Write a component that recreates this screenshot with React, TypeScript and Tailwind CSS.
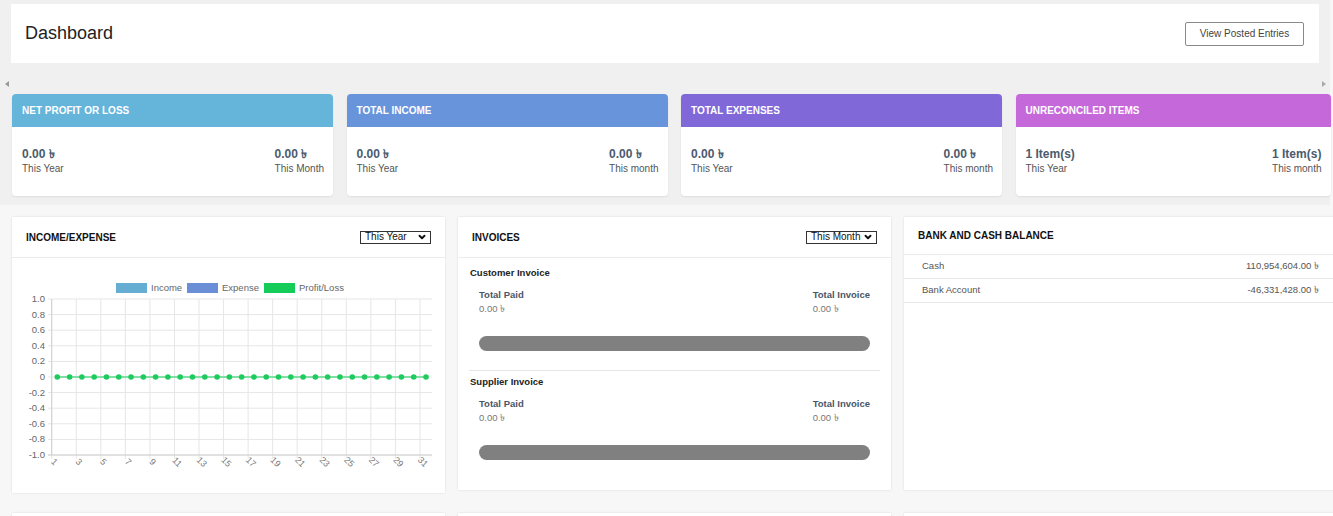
import { ChevronDown } from "lucide-react";

const kpis = [
  { title: "NET PROFIT OR LOSS", color: "bg-[#65b4da]", left: "0.00 ৳", right: "0.00 ৳", rightLabel: "This Month", w: "w-[321px]" },
  { title: "TOTAL INCOME", color: "bg-[#6794da]", left: "0.00 ৳", right: "0.00 ৳", rightLabel: "This month", w: "w-[321px]" },
  { title: "TOTAL EXPENSES", color: "bg-[#8068d9]", left: "0.00 ৳", right: "0.00 ৳", rightLabel: "This month", w: "w-[321px]" },
  { title: "UNRECONCILED ITEMS", color: "bg-[#c568d9]", left: "1 Item(s)", right: "1 Item(s)", rightLabel: "This month", w: "w-[315px]" },
];

const yLabels = ["1.0", "0.8", "0.6", "0.4", "0.2", "0", "-0.2", "-0.4", "-0.6", "-0.8", "-1.0"];
const points = Array.from({ length: 31 }, (_, i) => 45.3 + i * 12.29);

function Select({ label }: { label: string }) {
  return (
    <div className="flex h-[13px] w-[71px] items-center justify-between border border-[#333] bg-white pl-[4px] pr-[3px] text-[10px] leading-none text-[#111]">
      <span>{label}</span>
      <ChevronDown size={10} strokeWidth={4.5} />
    </div>
  );
}

function CardHeader({ title, children, h = "h-[41px]" }: { title: string; children?: React.ReactNode; h?: string }) {
  return (
    <div className={`flex ${h} items-center justify-between border-b border-[#ececec] px-[14px]`}>
      <span className="text-[10px] font-bold text-[#111]">{title}</span>
      {children}
    </div>
  );
}

function Chart() {
  return (
    <svg width="433" height="235" className="block">
      <rect x="104" y="25" width="31" height="10" fill="#66add3" />
      <text x="139" y="33" fontSize="9.5" fill="#666">Income</text>
      <rect x="175" y="25" width="31" height="10" fill="#6a8fd6" />
      <text x="210" y="33" fontSize="9.5" fill="#666">Expense</text>
      <rect x="252" y="25" width="31" height="10" fill="#14cc5a" />
      <text x="287" y="33" fontSize="9.5" fill="#666">Profit/Loss</text>
      {yLabels.map((l, i) => (
        <g key={l}>
          <line x1="36" x2="420" y1={41 + i * 15.6} y2={41 + i * 15.6} stroke="#e6e6e6" strokeWidth="1" />
          <text x="33" y={44 + i * 15.6} fontSize="9.5" fill="#666" textAnchor="end">{l}</text>
        </g>
      ))}
      {Array.from({ length: 16 }, (_, k) => (
        <line key={k} x1={39.7 + k * 24.55} x2={39.7 + k * 24.55} y1="41" y2="201" stroke="#e6e6e6" strokeWidth="1" />
      ))}
      <line x1="39.7" x2="39.7" y1="41" y2="197" stroke="#d0d0d0" strokeWidth="1" />
      <line x1="36" x2="420" y1="197" y2="197" stroke="#d0d0d0" strokeWidth="1" />
      <line x1={points[0]} x2={points[30]} y1="119" y2="119" stroke="#7ee0a2" strokeWidth="2" />
      {points.map((x, i) => (
        <circle key={i} cx={x} cy="119" r="2.8" fill="#1fca5f" />
      ))}
      {points.map((x, i) =>
        i % 2 === 0 ? (
          <text key={i} x={x - 3} y="207" fontSize="9" fill="#777" textAnchor="middle" transform={`rotate(45 ${x - 3} 204)`}>
            {i + 1}
          </text>
        ) : null
      )}
    </svg>
  );
}

function InvoiceSection({ title, first }: { title: string; first?: boolean }) {
  return (
    <div className={`${first ? "pt-[9px] border-b border-[#e6e6e6] pb-[19px]" : "pt-[5px]"}`}>
      <div className="pl-[1px] text-[9.5px] font-bold leading-[12px] text-[#222]">{title}</div>
      <div className="px-[10px]">
        <div className="mt-[10px] flex justify-between">
          <div>
            <div className="text-[9.5px] font-bold leading-[12px] text-[#4a5568]">Total Paid</div>
            <div className="mt-[2px] text-[9.5px] leading-[12px] text-[#777]">0.00 ৳</div>
          </div>
          <div>
            <div className="text-[9.5px] font-bold leading-[12px] text-[#4a5568]">Total Invoice</div>
            <div className="mt-[2px] text-[9.5px] leading-[12px] text-[#777]">0.00 ৳</div>
          </div>
        </div>
        <div className="mt-[21px] h-[15px] rounded-full bg-[#808080]" />
      </div>
    </div>
  );
}

export default function App() {
  return (
    <div className="h-[700px] w-[1333px] overflow-hidden bg-[#f7f7f7] font-['Liberation_Sans',Arial,sans-serif]">
      <div className="w-[1330px] bg-[#f0f0f0] pt-[4px]">
        <div className="mx-[11px] flex h-[59px] items-center justify-between bg-white pl-[14px] pr-[15px]">
          <h1 className="text-[18px] text-[#222]">Dashboard</h1>
          <button className="h-[24px] w-[119px] rounded-[2px] border border-[#8a8a8a] bg-white text-[10px] text-[#444]">
            View Posted Entries
          </button>
        </div>

        <div className="relative h-[142px] pt-[31px] pl-[12px]">
          <span className="absolute left-[5px] top-[18px] h-0 w-0 border-y-[3.5px] border-r-[4px] border-y-transparent border-r-[#999]" />
          <span className="absolute left-[1322px] top-[18px] h-0 w-0 border-y-[3.5px] border-l-[4px] border-y-transparent border-l-[#aaa]" />
          <div className="flex gap-[13.5px]">
            {kpis.map((k) => (
              <div key={k.title} className={`${k.w} shrink-0 rounded-[4px] bg-white shadow-[0_1px_2px_rgba(0,0,0,0.08)]`}>
                <div className={`flex h-[33px] items-center rounded-t-[4px] px-[10px] text-[10px] font-bold text-white ${k.color}`}>
                  {k.title}
                </div>
                <div className="flex h-[69px] justify-between pl-[10px] pr-[9px] pt-[20px]">
                  <div>
                    <div className="text-[12px] font-bold leading-[14px] text-[#4b5b6e]">{k.left}</div>
                    <div className="mt-[2px] text-[10px] leading-[12px] text-[#555]">This Year</div>
                  </div>
                  <div>
                    <div className="text-[12px] font-bold leading-[14px] text-[#4b5b6e]">{k.right}</div>
                    <div className="mt-[2px] text-[10px] leading-[12px] text-[#555]">{k.rightLabel}</div>
                  </div>
                </div>
              </div>
            ))}
          </div>
        </div>
      </div>

      <div className="pl-[12px] pt-[12px]">
        <div className="flex items-start gap-[13px]">
          <div className="h-[276px] w-[433px] shrink-0 bg-white shadow-[0_0_2px_rgba(0,0,0,0.12)]">
            <CardHeader title="INCOME/EXPENSE">
              <Select label="This Year" />
            </CardHeader>
            <Chart />
          </div>

          <div className="h-[273px] w-[433px] shrink-0 bg-white shadow-[0_0_2px_rgba(0,0,0,0.12)]">
            <CardHeader title="INVOICES">
              <Select label="This Month" />
            </CardHeader>
            <div className="px-[11px]">
              <InvoiceSection title="Customer Invoice" first />
              <InvoiceSection title="Supplier Invoice" />
            </div>
          </div>

          <div className="h-[273px] w-[433px] shrink-0 bg-white shadow-[0_0_2px_rgba(0,0,0,0.12)]">
            <CardHeader title="BANK AND CASH BALANCE" h="h-[38px]" />
            {[
              ["Cash", "110,954,604.00 ৳"],
              ["Bank Account", "-46,331,428.00 ৳"],
            ].map(([name, val]) => (
              <div key={name} className="flex h-[24px] items-center justify-between border-b border-[#e6e6e6] px-[18px] text-[9.5px] text-[#555]">
                <span>{name}</span>
                <span>{val}</span>
              </div>
            ))}
          </div>
        </div>

        <div className="mt-[20px] flex gap-[13px]">
          <div className="h-[150px] w-[433px] shrink-0 bg-white shadow-[0_0_2px_rgba(0,0,0,0.12)]" />
          <div className="h-[150px] w-[433px] shrink-0 bg-white shadow-[0_0_2px_rgba(0,0,0,0.12)]" />
          <div className="h-[150px] w-[433px] shrink-0 bg-white shadow-[0_0_2px_rgba(0,0,0,0.12)]" />
        </div>
      </div>
    </div>
  );
}
